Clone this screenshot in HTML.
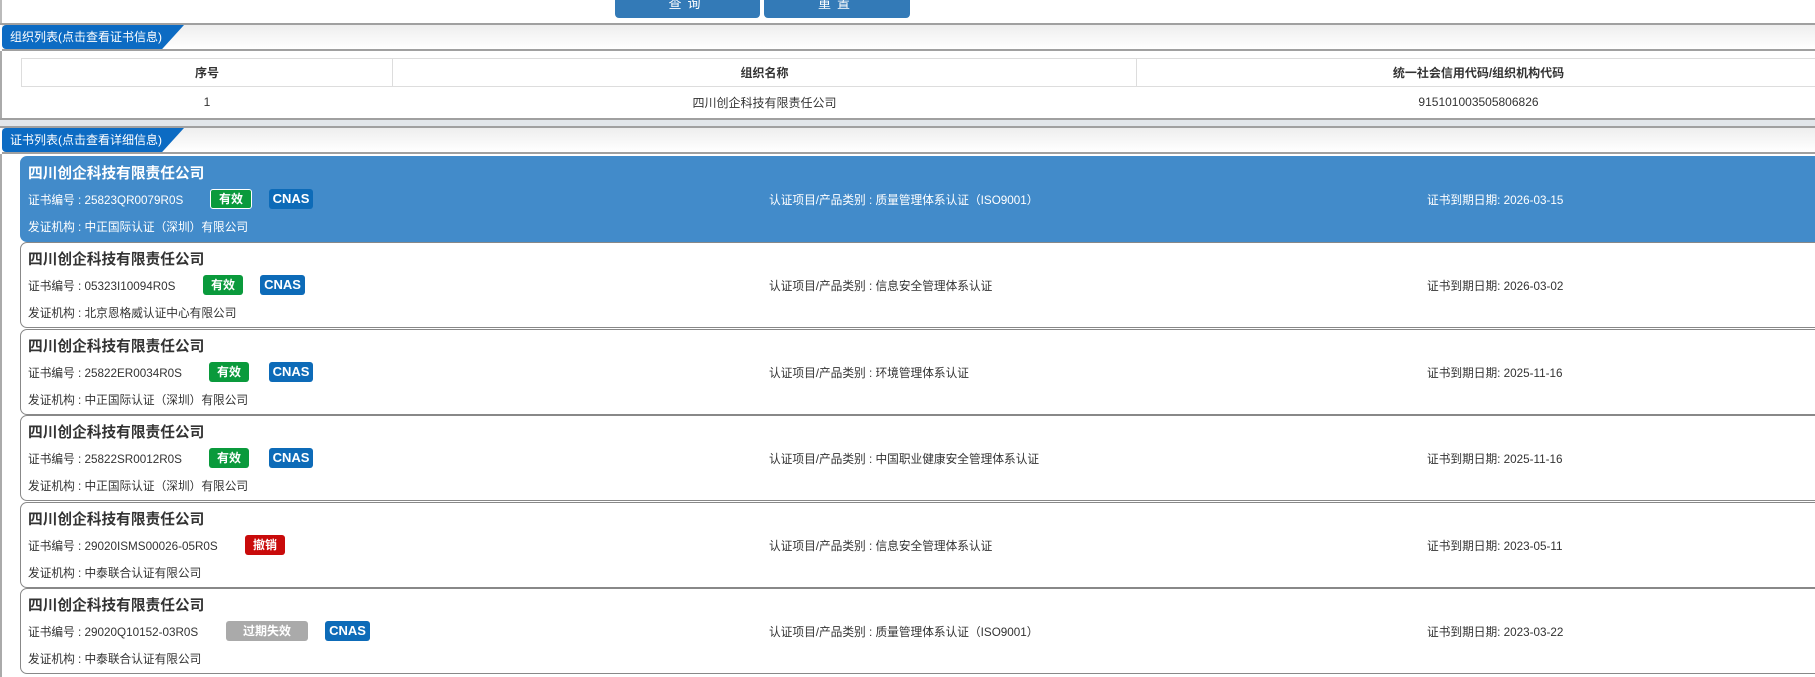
<!DOCTYPE html>
<html><head><meta charset="utf-8"><style>
*{margin:0;padding:0;box-sizing:border-box}
body{width:1815px;height:677px;overflow:hidden;background:#fff;font-family:"Liberation Sans","Noto Sans CJK SC",sans-serif;position:relative;color:#333}
.abs{position:absolute}
.btn{position:absolute;top:-6px;height:24px;background:#337ab7;border-radius:0 0 4px 4px;color:#fff;font-size:13px;text-align:center;line-height:20px;letter-spacing:6px}
.hline{position:absolute;left:0;width:1815px;height:2px;background:#a0a0a0}
.hdr{position:absolute;left:2px;width:1813px;height:26px;background:linear-gradient(#eee,#fff);border-bottom:2px solid #a0a0a0}
.tab{position:absolute;left:0;top:0;height:24px;width:182px;background:#0c6bc3;clip-path:polygon(0 0,100% 0,88% 100%,0 100%);border-radius:4px 0 0 4px;color:#fff;font-size:12px;line-height:24px;padding-left:8px}
table{position:absolute;left:21px;top:58px;width:1800px;border-collapse:collapse;font-size:12px}
td,th{border:1px solid #ddd;text-align:center;height:28px}
th{font-weight:bold;height:28px}
.card{position:absolute;left:20px;width:1810px;height:86px;border:1px solid #888;border-radius:7px;background:#fff;font-size:11.7px;color:#333}
.card.sel{background:#428bca;color:#fff;border-color:#428bca}
.t{position:absolute;left:7px;top:5px;font-size:14.7px;font-weight:bold}
.r2{position:absolute;top:34px;left:7px;white-space:nowrap}
.r3{position:absolute;top:61px;left:7px}
.m{position:absolute;top:34px;left:748px}
.d{position:absolute;top:34px;left:1406px}
.b{position:absolute;top:32px;height:20px;border-radius:3px;color:#fff;font-weight:bold;font-size:12px;text-align:center;line-height:20px}
.g{background:#0a9a3c}.c{background:#0d6bb8;font-size:13px}.rd{background:#c90b0b}.gr{background:#aaa}
</style></head><body>
<div class="btn" style="left:615px;width:145px">查询</div>
<div class="btn" style="left:764px;width:146px">重置</div>
<div class="abs" style="left:0;top:0;width:2px;height:24px;background:#bbb"></div>
<div class="hline" style="top:23px"></div>
<div class="hdr" style="top:25px"><div class="tab">组织列表(点击查看证书信息)</div></div>
<div class="abs" style="left:0;top:51px;width:2px;height:68px;background:#aaa"></div>
<table><tr><th style="width:371px">序号</th><th style="width:744px">组织名称</th><th>统一社会信用代码/组织机构代码</th></tr>
<tr><td style="height:31px;border:none">1</td><td style="border:none">四川创企科技有限责任公司</td><td style="border:none">915101003505806826</td></tr></table>
<div class="hline" style="top:118px"></div>
<div class="abs" style="left:0;top:120px;width:1815px;height:6px;background:#e2e6ea"></div>
<div class="hline" style="top:126px"></div>
<div class="hdr" style="top:128px"><div class="tab">证书列表(点击查看详细信息)</div></div>
<div class="abs" style="left:0;top:154px;width:2px;height:523px;background:#aaa"></div>

<div class="card sel" style="top:156px"><div class="t">四川创企科技有限责任公司</div><div class="r2">证书编号 : 25823QR0079R0S</div><div class="b g" style="left:189px;width:42px;border:1px solid #fff;line-height:18px">有效</div><div class="b c" style="left:248px;width:44px">CNAS</div><div class="m">认证项目/产品类别 : 质量管理体系认证（ISO9001）</div><div class="d">证书到期日期: 2026-03-15</div><div class="r3">发证机构 : 中正国际认证（深圳）有限公司</div></div>

<div class="card" style="top:242px"><div class="t">四川创企科技有限责任公司</div><div class="r2">证书编号 : 05323I10094R0S</div><div class="b g" style="left:182px;width:40px">有效</div><div class="b c" style="left:239px;width:45px">CNAS</div><div class="m">认证项目/产品类别 : 信息安全管理体系认证</div><div class="d">证书到期日期: 2026-03-02</div><div class="r3">发证机构 : 北京恩格威认证中心有限公司</div></div>

<div class="card" style="top:329px"><div class="t">四川创企科技有限责任公司</div><div class="r2">证书编号 : 25822ER0034R0S</div><div class="b g" style="left:188px;width:40px">有效</div><div class="b c" style="left:248px;width:44px">CNAS</div><div class="m">认证项目/产品类别 : 环境管理体系认证</div><div class="d">证书到期日期: 2025-11-16</div><div class="r3">发证机构 : 中正国际认证（深圳）有限公司</div></div>

<div class="card" style="top:415px"><div class="t">四川创企科技有限责任公司</div><div class="r2">证书编号 : 25822SR0012R0S</div><div class="b g" style="left:188px;width:40px">有效</div><div class="b c" style="left:248px;width:44px">CNAS</div><div class="m">认证项目/产品类别 : 中国职业健康安全管理体系认证</div><div class="d">证书到期日期: 2025-11-16</div><div class="r3">发证机构 : 中正国际认证（深圳）有限公司</div></div>

<div class="card" style="top:502px"><div class="t">四川创企科技有限责任公司</div><div class="r2">证书编号 : 29020ISMS00026-05R0S</div><div class="b rd" style="left:224px;width:40px">撤销</div><div class="m">认证项目/产品类别 : 信息安全管理体系认证</div><div class="d">证书到期日期: 2023-05-11</div><div class="r3">发证机构 : 中泰联合认证有限公司</div></div>

<div class="card" style="top:588px"><div class="t">四川创企科技有限责任公司</div><div class="r2">证书编号 : 29020Q10152-03R0S</div><div class="b gr" style="left:205px;width:82px">过期失效</div><div class="b c" style="left:304px;width:45px">CNAS</div><div class="m">认证项目/产品类别 : 质量管理体系认证（ISO9001）</div><div class="d">证书到期日期: 2023-03-22</div><div class="r3">发证机构 : 中泰联合认证有限公司</div></div>
</body></html>
